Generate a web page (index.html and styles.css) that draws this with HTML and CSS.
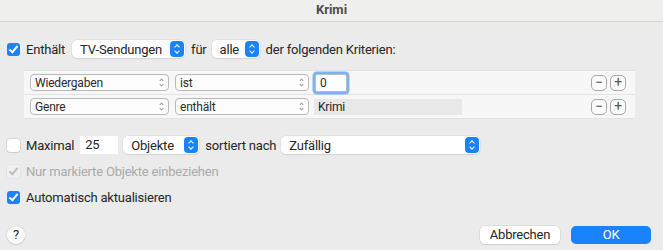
FILE: index.html
```html
<!DOCTYPE html>
<html lang="de">
<head>
  <meta charset="UTF-8">
  <title>Krimi</title>
  <link rel="stylesheet" href="styles.css">
</head>
<body>

  <div class="titlebar">Krimi</div>

  <div class="sheet">
    <div class="line first">
      <span class="check on"></span>
      <span class="label">Enthält</span>
      <span class="popup wide-tv">TV-Sendungen<span class="stepper"></span></span>
      <span class="label">für</span>
      <span class="popup wide-alle">alle<span class="stepper"></span></span>
      <span class="label">der folgenden Kriterien:</span>
    </div>

    <div class="criteria">
      <div class="rule">
        <span class="mini field-a">Wiedergaben<span class="arrows"></span></span>
        <span class="mini field-b">ist<span class="arrows"></span></span>
        <span class="value focus">0</span>
        <span class="spacer"></span>
        <span class="round">&minus;</span>
        <span class="round">+</span>
      </div>
      <div class="rule">
        <span class="mini field-a">Genre<span class="arrows"></span></span>
        <span class="mini field-b">enthält<span class="arrows"></span></span>
        <span class="value grey">Krimi</span>
        <span class="spacer"></span>
        <span class="round">&minus;</span>
        <span class="round">+</span>
      </div>
    </div>

    <div class="line limit">
      <span class="check"></span>
      <span class="label">Maximal</span>
      <span class="number">25</span>
      <span class="popup wide-obj">Objekte<span class="stepper"></span></span>
      <span class="label">sortiert nach</span>
      <span class="popup wide-sort">Zufällig<span class="stepper"></span></span>
    </div>

    <div class="line option disabled">
      <span class="check dim"></span>
      <span class="label">Nur markierte Objekte einbeziehen</span>
    </div>

    <div class="line option">
      <span class="check on"></span>
      <span class="label">Automatisch aktualisieren</span>
    </div>

    <div class="footer">
      <span class="help">?</span>
      <span class="spacer"></span>
      <span class="button">Abbrechen</span>
      <span class="button primary">OK</span>
    </div>
  </div>

</body>
</html>
```

FILE: styles.css
```css
body {
  margin: 0;
  width: 663px;
  height: 250px;
  background: #ebebeb;
  font-family: 'Roboto', 'Liberation Sans', sans-serif;
  font-size: 13px;
  letter-spacing: -0.2px;
  color: #262626;
  overflow: hidden;
  white-space: nowrap;
}

.titlebar {
  height: 21px;
  line-height: 20px;
  text-align: center;
  font-weight: 700;
  font-size: 13px;
  letter-spacing: 0;
  color: #4d4d4d;
  background: #efefed;
  border-bottom: 1px solid #d3d3d3;
}

.sheet {
  padding: 0 12px 0 7px;
}

.line {
  display: flex;
  align-items: center;
  height: 20px;
}

.line.first { margin-top: 17px; }
.line.limit { margin-top: 16px; }
.line.option { margin-top: 6px; }

.label { margin: 0 5px 0 6px; }

.check {
  width: 13px;
  height: 13px;
  border-radius: 3px;
  background: #fff;
  box-shadow: 0 0 0 0.5px #c4c4c4, 0 1px 1px rgba(0,0,0,0.08);
  position: relative;
  flex: none;
}

.check.on { background: #1a82fb; box-shadow: none; }

.check.on::after,
.check.dim::after {
  content: "";
  position: absolute;
  left: 4px;
  top: 1px;
  width: 3px;
  height: 7px;
  border: solid #fff;
  border-width: 0 2px 2px 0;
  transform: rotate(40deg);
}

.check.dim { background: #f0f0f0; box-shadow: 0 0 0 0.5px #dcdcdc; }
.check.dim::after { border-color: #bdbdbd; }

.disabled .label { color: #aaaaaa; }

.popup {
  display: flex;
  align-items: center;
  justify-content: space-between;
  height: 18px;
  padding: 0 1px 0 8px;
  background: #fff;
  border-radius: 5px;
  box-shadow: 0 0 0 0.5px #d8d8d8, 0 1px 1px rgba(0,0,0,0.12);
  box-sizing: border-box;
}

.wide-tv { width: 113px; margin-left: 2px; }
.wide-alle { width: 48px; }
.wide-obj { width: 76px; }
.wide-sort { width: 199px; }

.stepper {
  width: 14px;
  height: 16px;
  border-radius: 4px;
  background: #1a82fb;
  position: relative;
  flex: none;
}

.stepper::before,
.stepper::after {
  content: "";
  position: absolute;
  left: 5px;
  width: 3px;
  height: 3px;
  border: solid #fff;
  border-width: 1.5px 0 0 1.5px;
}

.stepper::before { top: 4px; transform: rotate(45deg); }
.stepper::after { top: 8px; transform: rotate(225deg); }

.criteria {
  margin: 11px 0 0 17px;
  width: 611px;
  background: #f7f7f7;
  border-top: 1px solid #e2e2e2;
  border-bottom: 1px solid #e2e2e2;
}

.rule {
  display: flex;
  align-items: center;
  height: 23px;
  padding: 0 9px 0 6px;
  font-size: 12px;
}

.rule + .rule { border-top: 1px solid #e4e4e4; }

.mini {
  display: flex;
  align-items: center;
  justify-content: space-between;
  height: 15px;
  padding: 0 4px 0 4px;
  border: 1px solid #b9b9b9;
  border-radius: 4px;
  background: #fdfdfd;
  box-sizing: content-box;
  color: #2b2b2b;
}

.field-a { width: 129px; margin-right: 6px; }
.field-b { width: 124px; margin-right: 5px; }

.arrows {
  width: 5px;
  height: 9px;
  position: relative;
}

.arrows::before,
.arrows::after {
  content: "";
  position: absolute;
  left: 1px;
  width: 2px;
  height: 2px;
  border: solid #9a9a9a;
  border-width: 1px 0 0 1px;
}

.arrows::before { top: 1px; transform: rotate(45deg); }
.arrows::after { top: 5px; transform: rotate(225deg); }

.value {
  height: 16px;
  line-height: 16px;
  padding: 0 4px;
  color: #1f1f1f;
}

.value.focus {
  width: 22px;
  background: #fff;
  border: 1px solid #bcbcbc;
  box-shadow: 0 0 0 2.5px #7eb1f7;
  border-radius: 2px;
  margin-left: 1px;
}

.value.grey {
  width: 140px;
  background: #e8e8e8;
}

.spacer { flex: 1; }

.round {
  width: 14px;
  height: 14px;
  margin-left: 3px;
  border: 1px solid #a8a8a8;
  border-radius: 5px;
  background: #fbfbfb;
  text-align: center;
  line-height: 13px;
  font-size: 14px;
  color: #555;
}

.number {
  width: 38px;
  height: 18px;
  line-height: 18px;
  padding-left: 5px;
  box-sizing: border-box;
  background: #fff;
  margin: 0 5px 0 1px;
}

.footer {
  display: flex;
  align-items: center;
  margin-top: 18px;
  height: 19px;
}

.help {
  width: 18px;
  height: 18px;
  border-radius: 50%;
  background: #fff;
  box-shadow: 0 0 0 0.5px #cfcfcf, 0 1px 1px rgba(0,0,0,0.15);
  text-align: center;
  line-height: 18px;
  font-size: 13px;
}

.button {
  width: 80px;
  height: 18px;
  line-height: 18px;
  text-align: center;
  background: #fff;
  border-radius: 5px;
  box-shadow: 0 0 0 0.5px #d2d2d2, 0 1px 1px rgba(0,0,0,0.12);
  margin-left: 11px;
}

.button.primary {
  background: #1a82fb;
  color: #fff;
  box-shadow: none;
}
```
